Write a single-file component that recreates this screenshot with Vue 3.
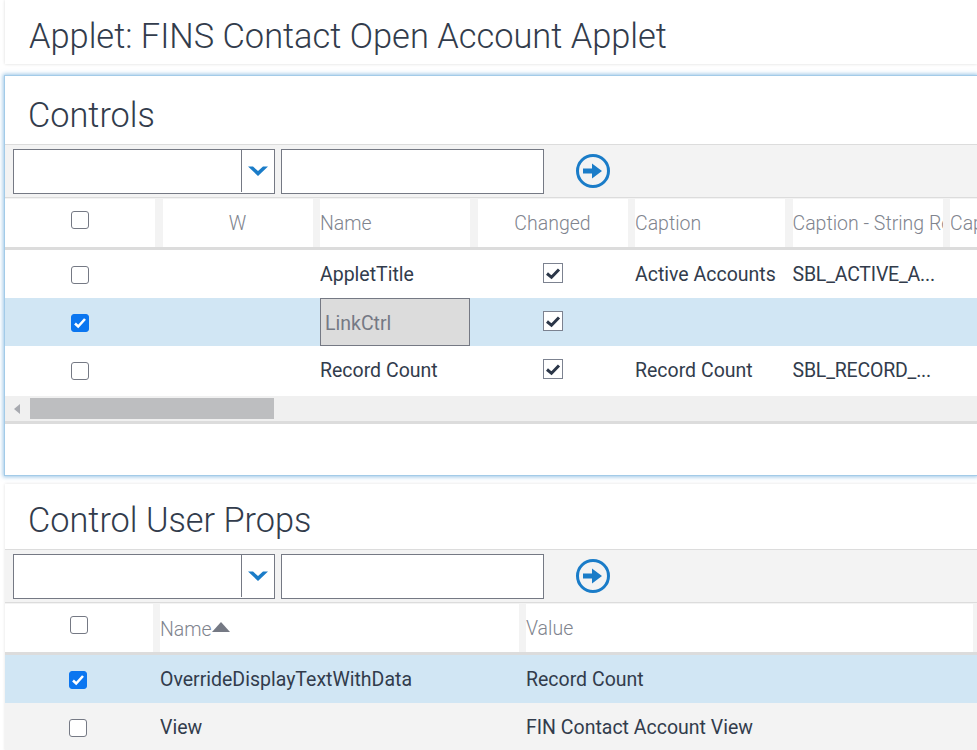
<template>
  <div class="page">
    <div class="title-card">
      <h1>Applet: FINS Contact Open Account Applet</h1>
    </div>

    <section class="panel active">
      <h2>Controls</h2>
      <div class="query">
        <div class="combo">
          <div class="combo-text"></div>
          <div class="combo-btn">
            <svg width="22" height="12" viewBox="0 0 22 12"><path d="M1 1.5h5l5 4.5 5-4.5h5L11 11z" fill="#1a7cc8" /></svg>
          </div>
        </div>
        <div class="field"></div>
        <svg class="go" width="36" height="36" viewBox="0 0 36 36">
          <circle cx="18" cy="18" r="15.5" fill="none" stroke="#1a7cc8" stroke-width="3" />
          <path d="M8 15.500h9V10.500l10 7.500-10 7.500V20.500H8z" fill="#1a7cc8" />
        </svg>
      </div>

      <div class="grid-head controls-cols">
        <div class="cell check-cell up"><span class="box"></span></div>
        <div class="cell center">W</div>
        <div class="cell">Name</div>
        <div class="cell center">Changed</div>
        <div class="cell">Caption</div>
        <div class="cell">Caption - String Reference</div>
        <div class="cell">Caption - String Override</div>
      </div>
      <div
        v-for="row in controlRows"
        :key="row.name"
        class="grid-row controls-cols"
        :class="{ selected: row.selected }"
      >
        <div class="cell check-cell">
          <span class="box" :class="{ on: row.selected }">
            <svg v-if="row.selected" width="14" height="12" viewBox="0 0 14 12"><path d="M2 6.500l3.200 3L12 2" fill="none" stroke="#fff" stroke-width="2.600" /></svg>
          </span>
        </div>
        <div class="cell"></div>
        <div class="cell" :class="{ editing: row.selected }">{{ row.name }}</div>
        <div class="cell center">
          <span class="flag">
            <svg width="16" height="13" viewBox="0 0 16 13"><path d="M2 6.500l4.500 3.800L14 2.500" fill="none" stroke="#2b3648" stroke-width="3" /></svg>
          </span>
        </div>
        <div class="cell">{{ row.caption }}</div>
        <div class="cell ref">{{ row.ref }}</div>
        <div class="cell"></div>
      </div>
      <div class="hscroll">
        <span class="arrow"></span>
        <span class="thumb"></span>
      </div>
      <div class="foot"></div>
    </section>

    <section class="panel plain">
      <h2>Control User Props</h2>
      <div class="query">
        <div class="combo">
          <div class="combo-text"></div>
          <div class="combo-btn">
            <svg width="22" height="12" viewBox="0 0 22 12"><path d="M1 1.5h5l5 4.5 5-4.5h5L11 11z" fill="#1a7cc8" /></svg>
          </div>
        </div>
        <div class="field"></div>
        <svg class="go" width="36" height="36" viewBox="0 0 36 36">
          <circle cx="18" cy="18" r="15.5" fill="none" stroke="#1a7cc8" stroke-width="3" />
          <path d="M8 15.500h9V10.500l10 7.500-10 7.500V20.500H8z" fill="#1a7cc8" />
        </svg>
      </div>

      <div class="grid-head props-cols">
        <div class="cell check-cell up"><span class="box"></span></div>
        <div class="cell name-head">Name<span class="sort"></span></div>
        <div class="cell">Value</div>
      </div>
      <div
        v-for="row in propRows"
        :key="row.name"
        class="grid-row props-cols"
        :class="{ selected: row.selected, alt: !row.selected }"
      >
        <div class="cell check-cell">
          <span class="box" :class="{ on: row.selected }">
            <svg v-if="row.selected" width="14" height="12" viewBox="0 0 14 12"><path d="M2 6.500l3.200 3L12 2" fill="none" stroke="#fff" stroke-width="2.600" /></svg>
          </span>
        </div>
        <div class="cell">{{ row.name }}</div>
        <div class="cell">{{ row.value }}</div>
      </div>
    </section>
  </div>
</template>

<script setup>
const controlRows = [
  { name: "AppletTitle", caption: "Active Accounts", ref: "SBL_ACTIVE_A...", selected: false },
  { name: "LinkCtrl", caption: "", ref: "", selected: true },
  { name: "Record Count", caption: "Record Count", ref: "SBL_RECORD_...", selected: false },
];

const propRows = [
  { name: "OverrideDisplayTextWithData", value: "Record Count", selected: true },
  { name: "View", value: "FIN Contact Account View", selected: false },
];
</script>

<style>
html,
body {
  margin: 0;
  height: 100%;
  overflow: hidden;
  background: #fff;
}
</style>

<style scoped>
.page {
  width: 977px;
  height: 750px;
  overflow: hidden;
  font-family: Roboto, "Liberation Sans", sans-serif;
  color: #323c4c;
  background: #fff;
}
.title-card {
  height: 64px;
  margin-left: 5px;
  padding-left: 24px;
  background: #fff;
  box-shadow: 0 0 3px rgba(0, 0, 0, 0.15);
  display: flex;
  align-items: center;
}
h1 {
  margin: 0;
  font-size: 34.400px;
  font-weight: 300;
  line-height: 1;
  padding-top: 8px;
}
h2 {
  margin: 0;
  height: 68px;
  padding: 10px 0 0 23px;
  box-sizing: border-box;
  display: flex;
  align-items: center;
  font-size: 34.300px;
  font-weight: 300;
}
.panel {
  margin-left: 5px;
  background: #fff;
}
.active {
  margin-top: 11px;
  margin-left: 4px;
  border-left: 1px solid #a3cbe8;
  border-top: 1px solid #a3cbe8;
  border-bottom: 1px solid #a3cbe8;
  box-shadow: 0 0 4px 1px rgba(90, 160, 215, 0.6);
}
.plain {
  margin-top: 8px;
  box-shadow: 0 0 3px rgba(0, 0, 0, 0.12);
}
.plain h2 {
  height: 65px;
  padding-top: 6px;
}
.query {
  height: 54px;
  box-sizing: border-box;
  border-top: 1px solid #dcdcdc;
  border-bottom: 1px solid #dcdcdc;
  background: #f3f3f3;
  padding-left: 8px;
  display: flex;
  align-items: center;
  gap: 6px;
}
.combo,
.field {
  height: 45px;
  box-sizing: border-box;
  border: 1px solid #757984;
  background: #fff;
}
.combo {
  width: 262px;
  display: flex;
}
.combo-text {
  flex: 1;
  border-right: 1px solid #757984;
  margin-bottom: 1px;
}
.combo-btn {
  width: 32px;
  display: flex;
  align-items: center;
  justify-content: center;
}
.field {
  width: 263px;
}
.go {
  margin-left: 25px;
  flex: none;
}
.controls-cols {
  display: grid;
  grid-template-columns: 150px 150px 150px 150px 150px 150px 150px;
  column-gap: 7.500px;
  width: 1100px;
}
.props-cols {
  display: grid;
  grid-template-columns: 148px 359px 447px;
  column-gap: 7px;
}
.grid-head {
  height: 52px;
  box-sizing: border-box;
  background: #f3f3f3;
  border-bottom: 3px solid #dcdcdc;
  padding-top: 1px;
}
.grid-head .cell {
  background: #fff;
  color: #80848e;
  font-size: 19.500px;
  font-weight: 300;
}
.grid-head .name-head {
  padding-top: 2px;
}
.grid-row {
  height: 48px;
  background: #fff;
  font-size: 19.500px;
}
.grid-row.selected {
  background: #d1e6f4;
}
.grid-row.alt {
  background: #f3f3f3;
}
.cell {
  display: flex;
  align-items: center;
  white-space: nowrap;
  overflow: hidden;
  min-width: 0;
}
.center {
  justify-content: center;
}
.check-cell {
  justify-content: center;
}
.ref {
  letter-spacing: -0.2px;
}
.box {
  width: 18px;
  height: 18px;
  margin-top: 2px;
  box-sizing: border-box;
  border: 1.500px solid #757984;
  border-radius: 3px;
  background: #fff;
  display: flex;
  align-items: center;
  justify-content: center;
}
.up .box {
  margin-top: 0;
  margin-bottom: 6px;
}
.props-cols .check-cell:not(.up) .box {
  margin-right: 2px;
}
.box.on {
  background: #0b76f0;
  border-color: #0b76f0;
}
.flag {
  width: 20px;
  height: 20px;
  margin-bottom: 2px;
  box-sizing: border-box;
  border: 1.500px solid #7c8290;
  background: #fff;
  display: flex;
  align-items: center;
  justify-content: center;
}
.editing {
  background: #dcdcdc;
  border: 1px solid #757984;
  box-sizing: border-box;
  padding: 2px 0 0 4px;
  color: #757984;
}
.sort {
  width: 0;
  height: 0;
  border-left: 9.500px solid transparent;
  border-right: 9.500px solid transparent;
  border-bottom: 10px solid #757984;
  margin-bottom: 4px;
}
.hscroll {
  height: 25px;
  margin-top: 2px;
  background: #f0f0f0;
  display: flex;
  align-items: center;
}
.arrow {
  width: 0;
  height: 0;
  margin-left: 9px;
  border-top: 5px solid transparent;
  border-bottom: 5px solid transparent;
  border-right: 6px solid #a8aab0;
}
.thumb {
  width: 244px;
  height: 21px;
  margin-left: 10px;
  background: #bdbec0;
}
.foot {
  height: 54px;
  border-top: 3px solid #dcdcdc;
  box-sizing: border-box;
}
</style>
